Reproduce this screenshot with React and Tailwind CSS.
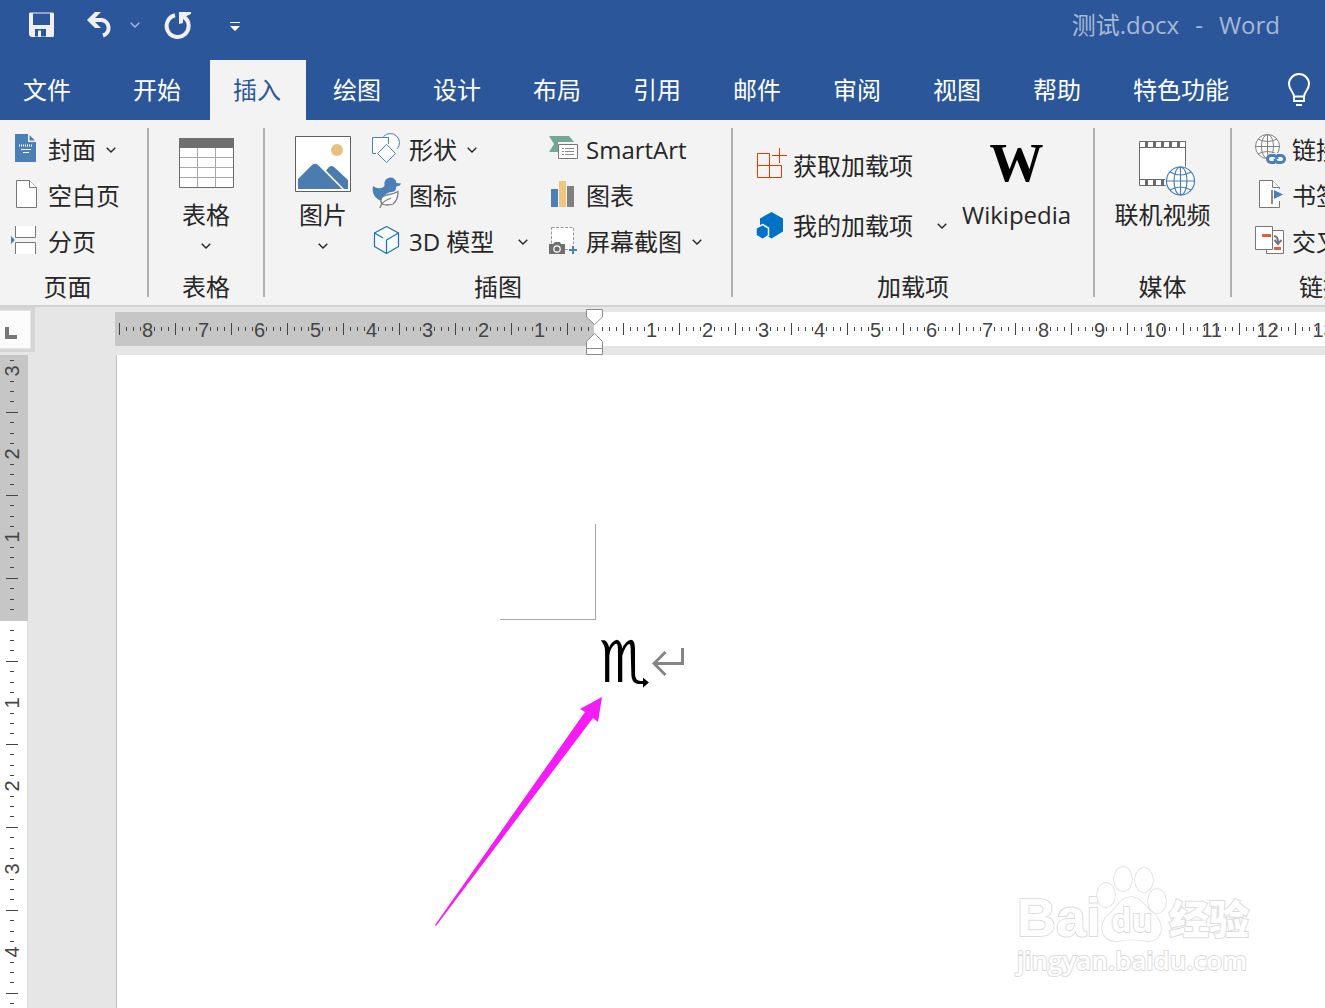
import { Fragment } from "react";

const tabs = ["开始", "插入", "绘图", "设计", "布局", "引用", "邮件", "审阅", "视图", "帮助"];

function Chevron({ className = "" }) {
  return (
    <svg width="10" height="6" viewBox="0 0 10 6" fill="none" stroke="currentColor" strokeWidth="1.4" className={className}>
      <path d="M0.7 0.7 5 5 9.3 0.7" />
    </svg>
  );
}

// title bar icons
function SaveIcon() {
  return (
    <svg width="26" height="26" viewBox="0 0 26 26">
      <path fill="#f0f0f0" fillRule="evenodd" d="M1 0.500H24L25 1.500V24L24 25H2L0 23V1.500ZM4 1.500V13H21V1.500ZM6 17V24.500H9V18.500H12V24.500H17V17Z" />
    </svg>
  );
}

function UndoIcon() {
  return (
    <svg width="27" height="28" viewBox="0 0 27 28" fill="none" stroke="#f0f0f0">
      <path d="M3 9H15A8 8 0 0 1 16 24.500" strokeWidth="4" />
      <path fill="#f0f0f0" stroke="none" d="M0 9 8 1H14L6 9 14 17H8Z" />
    </svg>
  );
}

function RedoIcon() {
  return (
    <svg width="28" height="28" viewBox="0 0 28 28" fill="none">
      <path d="M11 4.300A11 11 0 1 0 20 6" stroke="#f0f0f0" strokeWidth="4" />
      <path d="M15 1H27V3L22.500 5 19 8V12L15 13Z" fill="#f0f0f0" />
    </svg>
  );
}

function BulbIcon() {
  return (
    <svg width="24" height="34" viewBox="0 0 24 34" fill="none" stroke="#fff" strokeWidth="2">
      <path d="M7 23.500C7 19 2 17 2 11A10 10 0 0 1 22 11C22 17 17 19 17 23.500V28H7ZM7 23.500H17M9 32H15" />
    </svg>
  );
}

// ribbon icons
function CoverIcon() {
  return (
    <svg width="30" height="32" viewBox="0 0 30 32">
      <path fill="#4a7fb8" d="M4 0H17V8H25V28H4Z" />
      <path fill="#4a7fb8" d="M18.500 1V6.500H24Z" />
      <path stroke="#fff" strokeWidth="2" strokeDasharray="1 1" d="M8 11.500H21" />
      <path stroke="#fff" d="M10 15.500H20M12 18.500H18" />
    </svg>
  );
}

function BlankIcon() {
  return (
    <svg width="30" height="32" viewBox="0 0 30 32" fill="#fff" stroke="#777">
      <path d="M5.500 0.500H18.500L25.500 7.500V27.500H5.500Z" />
      <path d="M18.500 0.500V7.500H25.500" />
    </svg>
  );
}

function BreakIcon() {
  return (
    <svg width="30" height="32" viewBox="0 0 30 32" fill="#fff" stroke="#777">
      <path d="M4.500 0V11.500H24.500V0M4.500 28V16.500H24.500V28" />
      <path fill="#4a7fb8" stroke="none" d="M0 10 4 14 0 18Z" />
    </svg>
  );
}

function TableIcon() {
  return (
    <svg width="56" height="56" viewBox="0 0 56 56">
      <path fill="#fff" stroke="#6b6b6b" d="M1.500 2.500H55.500V51.500H1.500Z" />
      <path fill="#6f6f6f" d="M1 2H56V12H1Z" />
      <path fill="none" stroke="#a8a8a8" d="M19.500 12V51M37.500 12V51M2 21.500H55M2 31.500H55M2 41.500H55" />
    </svg>
  );
}

function PictureIcon() {
  return (
    <svg width="56" height="56" viewBox="0 0 56 56">
      <path fill="#fff" stroke="#5f5f5f" d="M0.500 0.500H55.500V55.500H0.500Z" />
      <circle cx="42" cy="14" r="6" fill="#e8c07f" />
      <path fill="#4a7cb0" d="M3 43 17 29Q20 26.500 23 29L47 53H3Z" />
      <path fill="#4a7cb0" d="M31 34.500 34 31Q36.500 29 39 31L53 44V53H49Z" />
    </svg>
  );
}

function ShapesIcon() {
  return (
    <svg width="30" height="32" viewBox="0 0 30 32" fill="none" stroke="#4a7fb8" className="overflow-visible">
      <path fill="#fff" stroke="none" d="M16 4H1V19H6L16 9Z" />
      <path fill="#fff" stroke="none" d="M17 3.500V10L24 16A8.500 8.500 0 1 0 12 2.500Z" />
      <path d="M16.500 10V3.500H0.500V19.500H4M11.500 2.500A9 9 0 1 1 25 15" />
      <path fill="#fff" d="M14.500 10.500 23.500 19.500 14.500 28.500 5.500 19.500Z" />
    </svg>
  );
}

function DuckIcon() {
  return (
    <svg width="30" height="32" viewBox="0 0 30 32" className="overflow-visible">
      <path fill="#4a7fb8" d="M1 6Q5 9 9 8Q13 7 12.500 4A6 6 0 0 1 24.500 3L29 3.500Q28 6.500 24 6.500Q24.500 10 22 11.500Q12 12 9.500 21Q-1 17 1 6Z" />
      <path fill="#fff" stroke="#7a7a7a" strokeWidth="1.300" d="M26 11.500Q21 14.500 15 15C8 17 8 21 10 24Q15 26 21 24C25 21 26 17 26 11.500Z" />
      <path fill="none" stroke="#7a7a7a" strokeWidth="1.300" d="M8 28Q9 22 19 18" />
    </svg>
  );
}

function CubeIcon() {
  return (
    <svg width="30" height="32" viewBox="0 0 30 32" fill="#fafafa" stroke="#1173c0" strokeWidth="1.200" strokeLinejoin="round">
      <path d="M14.500 0.500 26.500 7V20.500L14.500 27.500 2.500 20.500V7Z" />
      <path fill="none" d="M2.500 7 11 12M14.500 27V14L26.500 7" />
    </svg>
  );
}

function SmartArtIcon() {
  return (
    <svg width="30" height="32" viewBox="0 0 30 32">
      <path fill="#74a797" d="M0 2H20L25 8H9V18H0L5 10Z" />
      <path fill="#fff" stroke="#777" d="M9.500 10.500H28.500V24.500H9.500Z" />
      <path stroke="#8a8a8a" d="M13 14.500H15M16 14.500H25M13 17.500H15M16 17.500H25M13 20.500H15M16 20.500H25" />
    </svg>
  );
}

function ChartIcon() {
  return (
    <svg width="30" height="32" viewBox="0 0 30 32">
      <path fill="#4a7fb8" d="M2 9H9V27H2Z" />
      <path fill="#edc77d" d="M10 1H17V27H10Z" />
      <path fill="#808080" d="M18 6H25V27H18Z" />
    </svg>
  );
}

function ScreenshotIcon() {
  return (
    <svg width="30" height="32" viewBox="0 0 30 32">
      <path fill="#fff" stroke="#999" strokeDasharray="3 1.500" d="M2.500 1.500H24.500V23.500H2.500Z" />
      <path fill="#6f6f6f" d="M0 18H4L6 16H11L12 18H16V28H0Z" />
      <circle cx="8" cy="23" r="3.200" fill="none" stroke="#fff" strokeWidth="1.200" />
      <path fill="#f3f3f3" d="M20 18H30V31H20Z" />
      <path stroke="#4a7fb8" strokeWidth="2" d="M24 20V28M20 24H28" />
    </svg>
  );
}

function GetAddinsIcon() {
  return (
    <svg width="30" height="36" viewBox="0 0 30 36" fill="none" className="overflow-visible stroke-[#dc3c00]">
      <path d="M1.500 5.500H13.500V29.500H1.500Z" />
      <path d="M1.500 17.500H25.500V29.500H13.500" />
      <path d="M23.500 0V15M16 7.500H31" />
    </svg>
  );
}

function MyAddinsIcon() {
  return (
    <svg width="30" height="36" viewBox="0 0 30 36" fill="#0072c6" className="overflow-visible">
      <path d="M15.500 4 27 10.500V23.500L15.500 30.500 4 23.500V10.500Z" />
      <path stroke="#f3f3f3" strokeWidth="1.500" d="M6.500 16.500 12.500 20V27.500L6.500 31.500 0 27.500V20Z" />
    </svg>
  );
}

function VideoIcon() {
  return (
    <svg width="56" height="56" viewBox="0 0 56 56" fill="none" className="overflow-visible">
      <path fill="#fff" stroke="#6a6a6a" d="M4.500 5.500H50.500V49.500H4.500Z" />
      <path stroke="#6a6a6a" strokeWidth="7" strokeDasharray="3 5" d="M10 8.500H51M10 46.500H51" />
      <path stroke="#6a6a6a" d="M4 11.500H50M4 43.500H50" />
      <circle cx="45.500" cy="45" r="15.500" fill="#f3f3f3" />
      <g stroke="#4a7fb8" strokeWidth="1.200">
        <circle cx="45.500" cy="45" r="14" fill="#fff" />
        <ellipse cx="45.500" cy="45" rx="6.500" ry="14" />
        <path d="M45.500 31V59M31.500 45H59.500M35 36Q45.500 42 56 36M35 54Q45.500 48 56 54" />
      </g>
    </svg>
  );
}

function LinkIcon() {
  return (
    <svg width="30" height="32" viewBox="0 0 30 32" fill="none" className="overflow-visible">
      <g stroke="#808080">
        <circle cx="12.500" cy="12.500" r="12" fill="#fff" />
        <ellipse cx="12.500" cy="12.500" rx="6" ry="12" />
        <path d="M12.500 0V25M0 12.500H25M3 5Q12.500 10 22 5M3 20Q12.500 15 22 20" />
      </g>
      <path fill="#f3f3f3" d="M13 19H32V32H10Z" />
      <g stroke="#4a7fb8" strokeWidth="3">
        <path d="M20 28.500H16A3.500 3.500 0 0 1 16 21.500H19Q22 22 22 25" />
        <path d="M22 21.500H26A3.500 3.500 0 0 1 26 28.500H23Q20 28 20 25" />
      </g>
    </svg>
  );
}

function BookmarkIcon() {
  return (
    <svg width="30" height="32" viewBox="0 0 30 32">
      <path fill="#fff" stroke="#777" d="M4.500 0.500H17.500L24.500 7.500V27.500H4.500Z" />
      <path fill="#fff" stroke="#777" d="M17.500 0.500V7.500H24.500" />
      <path fill="#f3f3f3" d="M23 9H29V21H23Z" />
      <path stroke="#666" strokeWidth="1.500" d="M17 10V24" />
      <path fill="#4a7fb8" d="M19 10 28 14.500 19 19Z" />
    </svg>
  );
}

function CrossRefIcon() {
  return (
    <svg width="30" height="32" viewBox="0 0 30 32">
      <path fill="#fff" stroke="#777" d="M11.500 4.500H28.500V27.500H11.500Z" />
      <path fill="#fff" stroke="#777" d="M0.500 0.500H17.500V23.500H0.500Z" />
      <path fill="#d9623f" d="M7 8H16V11H7ZM19 21H26V24H19Z" />
      <path fill="none" stroke="#777" strokeWidth="2" d="M19 10Q23 10 23 17M19.500 14 23 18 26.500 14" />
    </svg>
  );
}

function SmallButton({ icon, label, chevron }) {
  return (
    <button type="button" className="flex h-[46px] items-center whitespace-nowrap">
      {icon}
      <span className="ml-[7px] pb-px">{label}</span>
      {chevron && <Chevron className={chevron === "far" ? "ml-6" : "ml-[10px]"} />}
    </button>
  );
}

function BigButton({ icon, label, chevron, className = "" }) {
  return (
    <button type="button" className={`flex flex-col items-center whitespace-nowrap pt-[9px] ${className}`}>
      {icon}
      <span className="leading-[46px]">{label}</span>
      {chevron && <Chevron className="mt-[5px]" />}
    </button>
  );
}

function Group({ label, className = "", labelClass = "text-center", last, children }) {
  return (
    <Fragment>
      <section className={`flex flex-col pt-[7px] ${className}`}>
        <div className="flex h-[138px] items-start">{children}</div>
        <h2 className={`h-10 whitespace-nowrap leading-[44px] ${labelClass}`}>{label}</h2>
      </section>
      {!last && <div className="my-2 w-[2px] shrink-0 bg-[#b1b1b1]" />}
    </Fragment>
  );
}

// one ruler unit: a long tick, three short, the number, three short
function HorizontalUnit({ label }) {
  return (
    <div className="flex h-full w-[56px] shrink-0 items-center">
      {[0, 1, 2, 3, 4, 5, 6, 7].map((slot) => (
        <div key={slot} className="flex w-[7px] shrink-0 justify-center">
          {slot === 0 && <div className="h-3 w-px bg-[#444]" />}
          {slot === 4 && <span className="pt-[2px] text-xl leading-none">{label}</span>}
          {slot !== 0 && slot !== 4 && <div className="h-1 w-px bg-[#444]" />}
        </div>
      ))}
    </div>
  );
}

function VerticalUnit({ label }) {
  return (
    <div className="flex h-[83px] w-full shrink-0 flex-col">
      {[0, 1, 2, 3, 4, 5, 6, 7].map((slot) => (
        <div key={slot} className="flex min-h-0 flex-1 items-center justify-center">
          {slot === 3 && <div className="h-px w-3 bg-[#444]" />}
          {slot === 7 && <span className="-rotate-90 text-xl leading-none">{label}</span>}
          {slot !== 3 && slot !== 7 && <div className="h-px w-1 bg-[#444]" />}
        </div>
      ))}
    </div>
  );
}

function Watermark() {
  return (
    <div className="absolute right-[72px] bottom-[34px] w-[236px] whitespace-nowrap font-bold text-white [paint-order:stroke_fill] [-webkit-text-stroke:2px_#dcdcdc]">
      <div className="flex h-[80px] items-end">
        <span className="w-[82px] font-['Liberation_Sans'] text-[54px] leading-[58px]">Bai</span>
        <div className="relative flex h-[80px] w-[66px] items-end justify-center">
          <svg width="72" height="80" viewBox="0 0 72 80" fill="#fff" stroke="#dcdcdc" strokeWidth="1.500" className="absolute -left-1 top-0">
            <ellipse cx="11" cy="29" rx="9" ry="12" />
            <ellipse cx="28" cy="13" rx="9" ry="12" />
            <ellipse cx="49" cy="14" rx="9" ry="12" />
            <ellipse cx="62" cy="35" rx="9" ry="12" />
            <path d="M36 31C46 31 49 40 57 46C71 57 68 76 52 75Q36 72 23 75C7 76 2 60 13 49C23 42 25 31 36 31Z" />
          </svg>
          <span className="relative text-[32px] leading-[52px]">du</span>
        </div>
        <span className="ml-1 font-['Noto_Sans_CJK_SC'] text-[40px] font-black leading-[58px]">经验</span>
      </div>
      <div className="text-[26px] font-semibold leading-[28px]">jingyan.baidu.com</div>
    </div>
  );
}

export default function App() {
  return (
    <div className="flex h-screen flex-col overflow-hidden bg-[#e6e6e6] font-['Open_Sans','Noto_Sans_CJK_SC',sans-serif] text-2xl text-[#262626]">
      {/* title bar */}
      <header className="flex h-[60px] shrink-0 items-center bg-[#2b579a] pb-[10px] text-[#a6b9d7]">
        <button type="button" aria-label="保存" className="ml-[29px]"><SaveIcon /></button>
        <button type="button" aria-label="撤消" className="ml-8"><UndoIcon /></button>
        <button type="button" aria-label="撤消选项" className="ml-4"><Chevron /></button>
        <button type="button" aria-label="重复" className="ml-6"><RedoIcon /></button>
        <button type="button" aria-label="自定义快速访问工具栏" className="ml-[38px] pt-[4px]">
          <svg width="10" height="10" viewBox="0 0 10 10" fill="#fff">
            <path d="M0 0H10V1H0ZM0 4H10L5 9Z" />
          </svg>
        </button>
        <h1 className="mr-[45px] ml-auto flex gap-4 whitespace-nowrap">
          <span>测试.docx</span>
          <span>-</span>
          <span>Word</span>
        </h1>
      </header>

      {/* tabs */}
      <nav className="flex h-[60px] shrink-0 items-stretch gap-1 whitespace-nowrap bg-[#2b579a] text-white">
        <button type="button" className="mr-[11px] w-[95px] shrink-0 pr-px pb-px">文件</button>
        {tabs.map((tab) => (
          <button
            key={tab}
            type="button"
            className={tab === "插入" ? "w-24 shrink-0 bg-[#f3f3f3] pr-[2px] pb-px text-[#2b579a]" : "w-24 shrink-0 pr-[2px] pb-px"}
          >
            {tab}
          </button>
        ))}
        <button type="button" className="w-[142px] shrink-0 pb-px">特色功能</button>
        <button type="button" aria-label="操作说明搜索" className="ml-[31px] shrink-0"><BulbIcon /></button>
      </nav>

      {/* ribbon */}
      <div className="flex h-[187px] shrink-0 overflow-hidden border-b-2 border-[#d2d2d2] bg-[#f3f3f3]">
        <Group label="页面" className="w-[147px] shrink-0" labelClass="pr-3 text-center">
          <div className="ml-[11px] flex flex-col items-start">
            <SmallButton icon={<CoverIcon />} label="封面" chevron="near" />
            <SmallButton icon={<BlankIcon />} label="空白页" />
            <SmallButton icon={<BreakIcon />} label="分页" />
          </div>
        </Group>
        <Group label="表格" className="w-[114px] shrink-0">
          <BigButton icon={<TableIcon />} label="表格" chevron className="mx-auto" />
        </Group>
        <Group label="插图" className="w-[466px] shrink-0">
          <BigButton icon={<PictureIcon />} label="图片" chevron className="ml-[30px]" />
          <div className="ml-[21px] flex w-[177px] flex-col items-start">
            <SmallButton icon={<ShapesIcon />} label="形状" chevron="near" />
            <SmallButton icon={<DuckIcon />} label="图标" />
            <SmallButton icon={<CubeIcon />} label="3D 模型" chevron="far" />
          </div>
          <div className="flex flex-col items-start">
            <SmallButton icon={<SmartArtIcon />} label="SmartArt" />
            <SmallButton icon={<ChartIcon />} label="图表" />
            <SmallButton icon={<ScreenshotIcon />} label="屏幕截图" chevron="near" />
          </div>
        </Group>
        <Group label="加载项" className="w-[360px] shrink-0">
          <div className="ml-[23px] flex w-[206px] flex-col items-start gap-[14px] pt-4">
            <SmallButton icon={<GetAddinsIcon />} label="获取加载项" />
            <SmallButton icon={<MyAddinsIcon />} label="我的加载项" chevron="far" />
          </div>
          <BigButton
            icon={<span className="h-[56px] font-['Liberation_Serif'] text-[54px] font-bold leading-[54px] text-black">W</span>}
            label="Wikipedia"
          />
        </Group>
        <Group label="媒体" className="w-[135px] shrink-0">
          <BigButton icon={<VideoIcon />} label="联机视频" className="mx-auto" />
        </Group>
        <Group label="链接" className="min-w-0 flex-1" labelClass="pl-[67px]" last>
          <div className="ml-[23px] flex flex-col items-start">
            <SmallButton icon={<LinkIcon />} label="链接" />
            <SmallButton icon={<BookmarkIcon />} label="书签" />
            <SmallButton icon={<CrossRefIcon />} label="交叉引用" />
          </div>
        </Group>
      </div>

      {/* horizontal ruler */}
      <div className="flex h-12 shrink-0 items-start font-['Liberation_Sans'] text-[#444]">
        <div className="h-[45px] w-[35px] shrink-0 bg-[#d5d5d5] pt-[3px] pr-1">
          <button type="button" aria-label="制表符" className="flex h-[39px] w-[31px] items-end border border-l-0 border-[#e6e6e6] bg-[#fcfcfc] pb-[9px] pl-[5px]">
            <div className="h-3 w-3 border-b-4 border-l-4 border-[#777]" />
          </button>
        </div>
        <div className="relative mt-[5px] ml-20 flex h-[34px] min-w-0 flex-1">
          <div className="flex w-[479px] shrink-0 overflow-hidden bg-[#c6c6c6] pl-px">
            {[8, 7, 6, 5, 4, 3, 2, 1, ""].map((n) => <HorizontalUnit key={n} label={n} />)}
          </div>
          <div className="flex min-w-0 flex-1 overflow-hidden bg-white pl-[2px]">
            <div className="flex w-[24px] shrink-0 justify-end overflow-hidden">
              <HorizontalUnit label="" />
            </div>
            {[1, 2, 3, 4, 5, 6, 7, 8, 9, 10, 11, 12, 13].map((n) => <HorizontalUnit key={n} label={n} />)}
          </div>
          <svg width="18" height="46" viewBox="0 0 18 46" fill="#fff" stroke="#8a8a8a" className="absolute -top-[3px] left-[471px]">
            <path d="M0.500 0.500H16.500V8L8.500 15.500 0.500 8Z" />
            <path d="M0.500 45.500V32.500L8.500 24.500 16.500 32.500V45.500ZM0.500 39.500H16.500" />
          </svg>
        </div>
      </div>

      <main className="flex min-h-0 flex-1">
        {/* vertical ruler */}
        <div className="flex w-7 shrink-0 flex-col overflow-hidden bg-white pr-1 font-['Liberation_Sans'] text-[#444] shadow-[inset_-1px_0_#dedede]">
          <div className="-mr-1 flex h-[266px] shrink-0 flex-col overflow-hidden bg-[#c6c6c6] pr-1">
            <div className="flex h-[21px] shrink-0 flex-col justify-end">
              <VerticalUnit label="3" />
            </div>
            <VerticalUnit label="2" />
            <VerticalUnit label="1" />
            <VerticalUnit label="" />
          </div>
          <div className="mt-1 flex flex-col">
            {[1, 2, 3, 4, 5].map((n) => <VerticalUnit key={n} label={n} />)}
          </div>
        </div>

        {/* page */}
        <div className="relative ml-[88px] min-w-0 flex-1 overflow-hidden border-l border-[#c0c0c0] bg-white pt-[169px] pl-[383px]">
          <div className="h-24 w-24 border-r border-b border-[#a6a6a6]" />
          <p className="ml-[99px] flex h-[84px] items-center gap-px text-black">
            <span className="font-['DejaVu_Sans'] text-[58px] leading-[84px]">♏︎</span>
            <svg width="32" height="28" viewBox="0 0 32 28" fill="none" stroke="#858585" strokeWidth="3">
              <path d="M30.500 0V15.500H2M13.500 4 2 15.500 13.500 27" />
            </svg>
          </p>
          <svg width="168" height="230" viewBox="0 0 168 230" className="absolute top-[342px] left-[318px]">
            <path fill="#f51bf5" d="M167 0 145 12 150 15 0 228 1 229 158 21 163 25Z" />
          </svg>
          <Watermark />
        </div>
      </main>
    </div>
  );
}
